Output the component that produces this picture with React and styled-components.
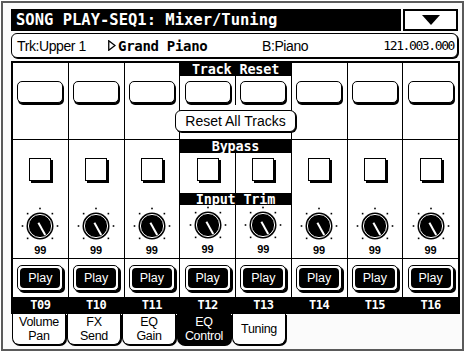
import React from "react";
import styled, { createGlobalStyle } from "styled-components";

const GlobalStyle = createGlobalStyle`
  html, body { margin: 0; padding: 0; background: #fff; }
  * { box-sizing: border-box; }
`;

const MONO = `"DejaVu Sans Mono", "Liberation Mono", monospace`;
const SANS = `"Liberation Sans", Arial, sans-serif`;

const Frame = styled.div`
  margin: 1px;
  width: 463px;
  height: 350px;
  border: 2px solid #5a5a5a;
  background: #fbfbfb;
  padding: 6px 2px 0 8px;
  font-family: ${SANS};
  color: #000;
  display: flex;
  flex-direction: column;
`;

const TitleRow = styled.div`
  display: flex;
  height: 22px;
  margin-right: 2px;
  gap: 2px;
`;

const Title = styled.div`
  flex: 1;
  background: #000;
  color: #fff;
  font-family: ${MONO};
  font-weight: bold;
  font-size: 15.5px;
  line-height: 22px;
  padding-left: 5px;
  white-space: nowrap;
`;

const Dropdown = styled.div`
  width: 55px;
  border: 2px solid #000;
  background: #fff;
  display: flex;
  align-items: center;
  justify-content: center;

  &::after {
    content: "";
    border-left: 9px solid transparent;
    border-right: 9px solid transparent;
    border-top: 10px solid #000;
  }
`;

const InfoBar = styled.div`
  margin-top: 2px;
  margin-right: 2px;
  height: 25px;
  border: 1px solid #000;
  border-radius: 6px;
  box-shadow: 1px 1px 0 #000;
  background: #fff;
  display: flex;
  align-items: center;
  padding: 0 3px 0 5px;
  font-size: 14px;
  letter-spacing: -0.4px;
  white-space: nowrap;
`;

const InfoText = styled.span`
  width: ${({ $w }) => ($w ? `${$w}px` : "auto")};
  flex: ${({ $grow }) => ($grow ? 1 : "none")};
`;

const SongName = styled.span`
  width: 144px;
  font-family: ${MONO};
  font-weight: bold;
  font-size: 14px;
  letter-spacing: -0.3px;
`;

const Position = styled.span`
  font-family: ${MONO};
  font-size: 13px;
  letter-spacing: -1.4px;
`;

const Panel = styled.div`
  margin-top: 3px;
  border: 2px solid #000;
  border-bottom-width: 1px;
  background: #000;
  display: flex;
  flex-direction: column;
  gap: 1px;
`;

const Section = styled.div`
  height: ${({ $h }) => $h}px;
  display: grid;
  grid-template-columns: repeat(8, 1fr);
  grid-template-rows: ${({ $rows }) => $rows || "1fr"};
  column-gap: 1px;
  background: #000;
`;

const Strip = styled.div`
  grid-column: ${({ $col }) => $col};
  grid-row: 1 / -1;
  background: #fff;
  display: flex;
  flex-direction: column;
  align-items: center;
  padding-top: ${({ $pad }) => $pad}px;
`;

const Cell = styled.div`
  grid-column: ${({ $col }) => $col};
  grid-row: ${({ $row }) => $row};
  background: #fff;
  display: flex;
  flex-direction: column;
  align-items: center;
  padding-top: ${({ $pad }) => $pad || 0}px;
`;

const GroupLabel = styled.div`
  grid-column: 4 / span 2;
  grid-row: ${({ $row }) => $row};
  background: #000;
  color: #fff;
  font-family: ${MONO};
  font-weight: bold;
  font-size: 13.5px;
  line-height: 13px;
  text-align: center;
  letter-spacing: -0.2px;
`;

const WideCell = styled.div`
  grid-column: 4 / span 2;
  grid-row: ${({ $row }) => $row};
  background: #fff;
  display: flex;
  justify-content: center;
  padding-top: 5px;
`;

const ResetButton = styled.div`
  width: 46px;
  height: 22px;
  border: 1px solid #000;
  border-radius: 5px;
  box-shadow: 1px 2px 0 #000;
  background: #fff;
`;

const ResetAllButton = styled.div`
  flex: none;
  width: 121px;
  height: 22px;
  border: 1px solid #000;
  border-radius: 6px;
  box-shadow: 1px 1px 0 #000;
  background: #fff;
  font-size: 14px;
  line-height: 20px;
  text-align: center;
  white-space: nowrap;
`;

const CheckBox = styled.div`
  width: 22px;
  height: 23px;
  border: 1.5px solid #000;
  box-shadow: 2px 2px 0 #000;
  background: #fff;
`;

const KnobWrap = styled.div`
  margin-top: ${({ $top }) => $top || 0}px;
  width: 40px;
  height: 40px;
`;

const Value = styled.div`
  margin-top: -2px;
  font-size: 11px;
  font-weight: bold;
  line-height: 12px;
`;

const PlayButton = styled.div`
  width: 46px;
  height: 26px;
  border: 1px solid #000;
  border-radius: 5px;
  box-shadow: 2px 2px 0 #000;
  background: #fff;
  padding: 2px;
`;

const PlayInner = styled.div`
  height: 100%;
  background: #000;
  border-radius: 4px;
  color: #fff;
  font-size: 12.5px;
  line-height: 20px;
  text-align: center;
`;

const TrackCell = styled.div`
  background: #000;
  color: #fff;
  font-family: ${MONO};
  font-weight: bold;
  font-size: 12px;
  line-height: 15px;
  text-align: center;
  letter-spacing: -0.5px;
`;

const TabRow = styled.div`
  display: flex;
  gap: 1px;
  padding-left: 1px;
`;

const Tab = styled.div`
  width: 54px;
  height: 31px;
  border: 1px solid #000;
  border-top: none;
  border-radius: 0 0 7px 7px;
  box-shadow: 1px 1px 0 #000;
  background: ${({ $active }) => ($active ? "#000" : "#fff")};
  color: ${({ $active }) => ($active ? "#fff" : "#000")};
  display: flex;
  flex-direction: column;
  justify-content: center;
  align-items: center;
  font-size: 12.5px;
  letter-spacing: -0.3px;
  padding-bottom: 1px;
`;

const TabLine = styled.span`
  display: block;
  height: 14px;
  line-height: 14px;
`;

const tracks = ["T09", "T10", "T11", "T12", "T13", "T14", "T15", "T16"];
const tabs = [
  ["Volume", "Pan"],
  ["FX", "Send"],
  ["EQ", "Gain"],
  ["EQ", "Control"],
  ["Tuning"],
];

const ticks = [-135, -90, -45, 0, 45, 90, 135];

function Knob({ top }) {
  return (
    <KnobWrap $top={top}>
      <svg width="40" height="40" viewBox="0 0 40 40">
        {ticks.map((a) => {
          const r = (a * Math.PI) / 180;
          const x = 20 + 17.5 * Math.sin(r);
          const y = 20 - 17.5 * Math.cos(r);
          return <rect key={a} x={x - 0.8} y={y - 0.8} width="1.6" height="1.6" fill="#000" />;
        })}
        <circle cx="20" cy="20" r="13.5" fill="#000" />
        <circle cx="20" cy="20" r="11.6" fill="none" stroke="#fff" strokeWidth="1" />
        <line x1="18.4" y1="16.8" x2="25.2" y2="29" stroke="#fff" strokeWidth="2" />
      </svg>
    </KnobWrap>
  );
}

function Arrow() {
  return (
    <svg width="8" height="11" viewBox="0 0 8 11" style={{ marginRight: 2, flex: "none" }}>
      <path d="M0.75 0.75 L7 5.5 L0.75 10.25 Z" fill="none" stroke="#000" strokeWidth="1.3" />
    </svg>
  );
}

const isGroup = (i) => i === 3 || i === 4;

export default function App() {
  return (
    <>
      <GlobalStyle />
      <Frame>
        <TitleRow>
          <Title>SONG PLAY-SEQ1: Mixer/Tuning</Title>
          <Dropdown />
        </TitleRow>
        <InfoBar>
          <InfoText $w={91}>Trk:Upper 1</InfoText>
          <Arrow />
          <SongName>Grand Piano</SongName>
          <InfoText $grow>B:Piano</InfoText>
          <Position>121.003.000</Position>
        </InfoBar>

        <Panel>
          <Section $h={76} $rows="13px 29px 1fr">
            {tracks.map((t, i) =>
              isGroup(i) ? (
                <Cell key={t} $col={i + 1} $row={2} $pad={5}>
                  <ResetButton />
                </Cell>
              ) : (
                <Strip key={t} $col={i + 1} $pad={18}>
                  <ResetButton />
                </Strip>
              )
            )}
            <GroupLabel $row={1}>Track Reset</GroupLabel>
            <WideCell $row={3}>
              <ResetAllButton>Reset All Tracks</ResetAllButton>
            </WideCell>
          </Section>

          <Section $h={118} $rows="13px 40px 12px 1fr">
            {tracks.map((t, i) =>
              isGroup(i) ? (
                <React.Fragment key={t}>
                  <Cell $col={i + 1} $row={2} $pad={5}>
                    <CheckBox />
                  </Cell>
                  <Cell $col={i + 1} $row={4}>
                    <Knob />
                    <Value>99</Value>
                  </Cell>
                </React.Fragment>
              ) : (
                <Strip key={t} $col={i + 1} $pad={18}>
                  <CheckBox />
                  <Knob top={25} />
                  <Value>99</Value>
                </Strip>
              )
            )}
            <GroupLabel $row={1}>Bypass</GroupLabel>
            <GroupLabel $row={3}>Input Trim</GroupLabel>
          </Section>

          <Section $h={38}>
            {tracks.map((t, i) => (
              <Cell key={t} $col={i + 1} $row={1} $pad={6}>
                <PlayButton>
                  <PlayInner>Play</PlayInner>
                </PlayButton>
              </Cell>
            ))}
          </Section>

          <Section $h={15}>
            {tracks.map((t) => (
              <TrackCell key={t}>{t}</TrackCell>
            ))}
          </Section>
        </Panel>

        <TabRow>
          {tabs.map((lines, i) => (
            <Tab key={i} $active={i === 3}>
              {lines.map((l) => (
                <TabLine key={l}>{l}</TabLine>
              ))}
            </Tab>
          ))}
        </TabRow>
      </Frame>
    </>
  );
}
